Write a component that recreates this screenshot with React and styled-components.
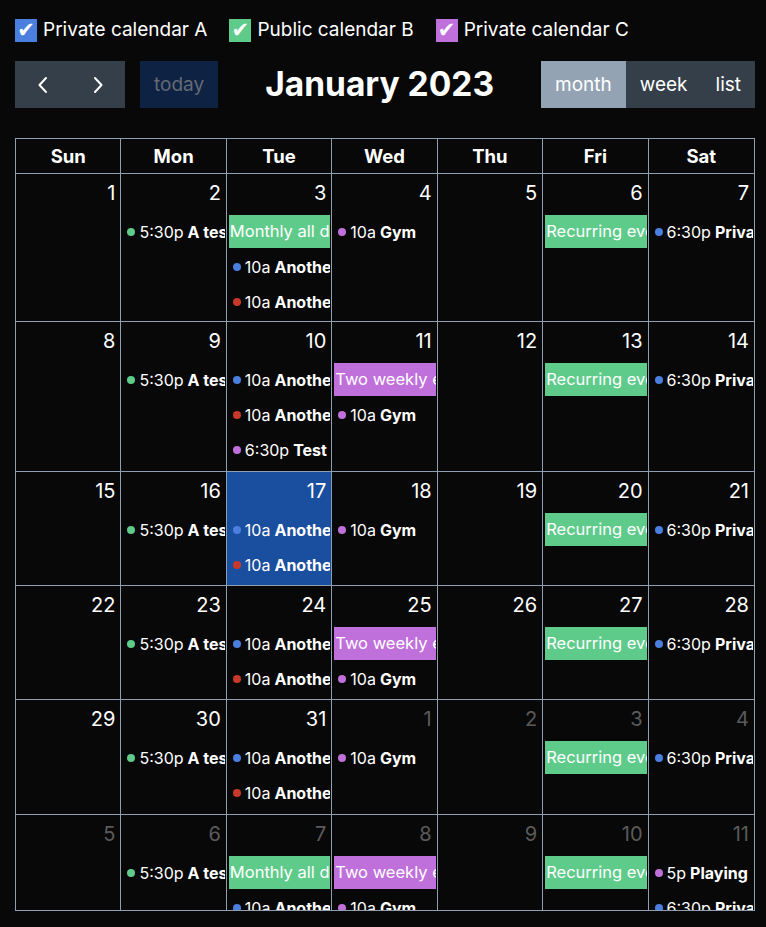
import React from 'react';
import styled, { createGlobalStyle } from 'styled-components';

const GlobalStyle = createGlobalStyle`
  html, body { margin: 0; padding: 0; background: #080808; }
  body { font-family: Inter, "Noto Sans", sans-serif; color: #fff; }
  * { box-sizing: border-box; }
`;

const G = '#5fcb8b';
const P = '#c070db';
const B = '#4a7fe0';
const R = '#c8392b';
const LINE = '#8f9fb2';

const Page = styled.div`
  width: 766px;
  height: 927px;
  padding: 19px 11px 0 15px;
  overflow: hidden;
  background: #080808;
`;

const CheckRow = styled.div`
  display: flex;
  align-items: center;
  gap: 22px;
  height: 22px;
`;

const CheckItem = styled.label`
  display: flex;
  align-items: center;
  gap: 6px;
  font-size: 19px;
  line-height: 22px;
  color: #fff;
`;

const CheckBox = styled.span`
  width: 22px;
  height: 23px;
  background: ${p => p.$color};
  display: flex;
  align-items: center;
  justify-content: center;
  font-family: "DejaVu Sans", sans-serif;
  font-size: 21px;
  line-height: 1;
  color: #fff;
`;

const Toolbar = styled.div`
  margin-top: 20px;
  height: 47px;
  display: flex;
  align-items: center;
  justify-content: space-between;
`;

const Chunk = styled.div`
  display: flex;
  align-items: center;
  gap: 15px;
`;

const ButtonGroup = styled.div`
  display: flex;
`;

const Button = styled.button`
  height: 47px;
  min-width: ${p => p.$w || 0}px;
  padding: 0 14px;
  border: none;
  border-radius: 0;
  background: ${p => p.$bg};
  color: ${p => p.$fg || '#fff'};
  font-family: Inter, "Noto Sans", sans-serif;
  font-size: 19px;
  display: flex;
  align-items: center;
  justify-content: center;
`;

const Title = styled.h2`
  margin: 0;
  font-size: 33.5px;
  font-weight: 700;
  line-height: 1;
  color: #fff;
`;

const Calendar = styled.div`
  margin-top: 30px;
  width: 740px;
  height: 773px;
  border: 1px solid ${LINE};
  overflow: hidden;
`;

const HeaderRow = styled.div`
  display: grid;
  grid-template-columns: repeat(7, 1fr);
  height: 35px;
`;

const HeaderCell = styled.div`
  border-bottom: 1px solid ${LINE};
  border-right: ${p => (p.$last ? 'none' : `1px solid ${LINE}`)};
  text-align: center;
  font-size: 18.5px;
  font-weight: 700;
  line-height: 34px;
`;

const WeekRow = styled.div`
  display: grid;
  grid-template-columns: repeat(7, 1fr);
  height: ${p => p.$h}px;
`;

const DayCell = styled.div`
  min-width: 0;
  overflow: hidden;
  border-bottom: 1px solid ${LINE};
  border-right: ${p => (p.$last ? 'none' : `1px solid ${LINE}`)};
  background: ${p => (p.$today ? '#1a4e9e' : 'transparent')};
`;

const DayTop = styled.div`
  height: 41px;
  padding: 4px 5px 0;
  text-align: right;
  font-size: 20px;
  line-height: 30px;
  color: ${p => (p.$other ? '#5b5b5b' : '#fff')};
`;

const EventList = styled.div`
  display: flex;
  flex-direction: column;
  gap: 2px;
`;

const BlockEvent = styled.div`
  height: 33px;
  margin: 0 1px 0 2px;
  padding: 0 1px;
  background: ${p => p.$color};
  color: #fff;
  font-size: 16.5px;
  line-height: 33px;
  white-space: nowrap;
  overflow: hidden;
`;

const DotEvent = styled.div`
  height: 33px;
  margin: 0 1px 0 2px;
  display: flex;
  align-items: center;
  white-space: nowrap;
  overflow: hidden;
  font-size: 16px;
  color: #fff;
`;

const Dot = styled.span`
  flex-shrink: 0;
  width: 8px;
  height: 8px;
  border-radius: 50%;
  margin: 0 4px;
  background: ${p => p.$color};
`;

const Time = styled.span`
  margin-right: 4px;
`;

const EvTitle = styled.span`
  font-weight: 700;
`;

const Chevron = ({ dir }) => (
  <svg width="12" height="18" viewBox="0 0 12 18" fill="none">
    <polyline
      points={dir === 'left' ? '9,2 2.5,9 9,16' : '3,2 9.5,9 3,16'}
      stroke="#fff"
      strokeWidth="2"
      strokeLinecap="round"
      strokeLinejoin="round"
    />
  </svg>
);

const monEv = { type: 'dot', color: G, time: '5:30p', title: 'A test event' };
const tueBlue = { type: 'dot', color: B, time: '10a', title: 'Another event' };
const tueRed = { type: 'dot', color: R, time: '10a', title: 'Another event' };
const monthly = { type: 'block', color: G, title: 'Monthly all day event' };
const twoWeekly = { type: 'block', color: P, title: 'Two weekly events' };
const gym = { type: 'dot', color: P, time: '10a', title: 'Gym' };
const recurring = { type: 'block', color: G, title: 'Recurring event' };
const satPriv = { type: 'dot', color: B, time: '6:30p', title: 'Private event' };
const test = { type: 'dot', color: P, time: '6:30p', title: 'Test' };
const playing = { type: 'dot', color: P, time: '5p', title: 'Playing' };

const d = (n, events = [], other = false, today = false) => ({ n, events, other, today });

const weeks = [
  {
    h: 148,
    days: [d(1), d(2, [monEv]), d(3, [monthly, tueBlue, tueRed]), d(4, [gym]), d(5), d(6, [recurring]), d(7, [satPriv])],
  },
  {
    h: 150,
    days: [d(8), d(9, [monEv]), d(10, [tueBlue, tueRed, test]), d(11, [twoWeekly, gym]), d(12), d(13, [recurring]), d(14, [satPriv])],
  },
  {
    h: 114,
    days: [d(15), d(16, [monEv]), d(17, [tueBlue, tueRed], false, true), d(18, [gym]), d(19), d(20, [recurring]), d(21, [satPriv])],
  },
  {
    h: 114,
    days: [d(22), d(23, [monEv]), d(24, [tueBlue, tueRed]), d(25, [twoWeekly, gym]), d(26), d(27, [recurring]), d(28, [satPriv])],
  },
  {
    h: 115,
    days: [d(29), d(30, [monEv]), d(31, [tueBlue, tueRed]), d(1, [gym], true), d(2, [], true), d(3, [recurring], true), d(4, [satPriv], true)],
  },
  {
    h: 150,
    days: [d(5, [], true), d(6, [monEv], true), d(7, [monthly, tueBlue], true), d(8, [twoWeekly, gym], true), d(9, [], true), d(10, [recurring], true), d(11, [playing, satPriv], true)],
  },
];

const dayNames = ['Sun', 'Mon', 'Tue', 'Wed', 'Thu', 'Fri', 'Sat'];

const calendars = [
  { color: B, label: 'Private calendar A' },
  { color: G, label: 'Public calendar B' },
  { color: P, label: 'Private calendar C' },
];

const Event = ({ ev }) =>
  ev.type === 'block' ? (
    <BlockEvent $color={ev.color}>{ev.title}</BlockEvent>
  ) : (
    <DotEvent>
      <Dot $color={ev.color} />
      <Time>{ev.time}</Time>
      <EvTitle>{ev.title}</EvTitle>
    </DotEvent>
  );

export default function App() {
  return (
    <Page>
      <GlobalStyle />
      <CheckRow>
        {calendars.map(c => (
          <CheckItem key={c.label}>
            <CheckBox $color={c.color}>✔</CheckBox>
            {c.label}
          </CheckItem>
        ))}
      </CheckRow>
      <Toolbar>
        <Chunk>
          <ButtonGroup>
            <Button $bg="#343f49" $w={55} aria-label="prev"><Chevron dir="left" /></Button>
            <Button $bg="#343f49" $w={55} aria-label="next"><Chevron dir="right" /></Button>
          </ButtonGroup>
          <Button $bg="#0e2244" $fg="#646a72">today</Button>
        </Chunk>
        <Title>January 2023</Title>
        <Chunk>
          <ButtonGroup>
            <Button $bg="#94a3b3">month</Button>
            <Button $bg="#343f49">week</Button>
            <Button $bg="#343f49">list</Button>
          </ButtonGroup>
        </Chunk>
      </Toolbar>
      <Calendar>
        <HeaderRow>
          {dayNames.map((n, i) => (
            <HeaderCell key={n} $last={i === 6}>{n}</HeaderCell>
          ))}
        </HeaderRow>
        {weeks.map((w, wi) => (
          <WeekRow key={wi} $h={w.h}>
            {w.days.map((day, di) => (
              <DayCell key={di} $last={di === 6} $today={day.today}>
                <DayTop $other={day.other}>{day.n}</DayTop>
                <EventList>
                  {day.events.map((ev, ei) => (
                    <Event key={ei} ev={ev} />
                  ))}
                </EventList>
              </DayCell>
            ))}
          </WeekRow>
        ))}
      </Calendar>
    </Page>
  );
}
